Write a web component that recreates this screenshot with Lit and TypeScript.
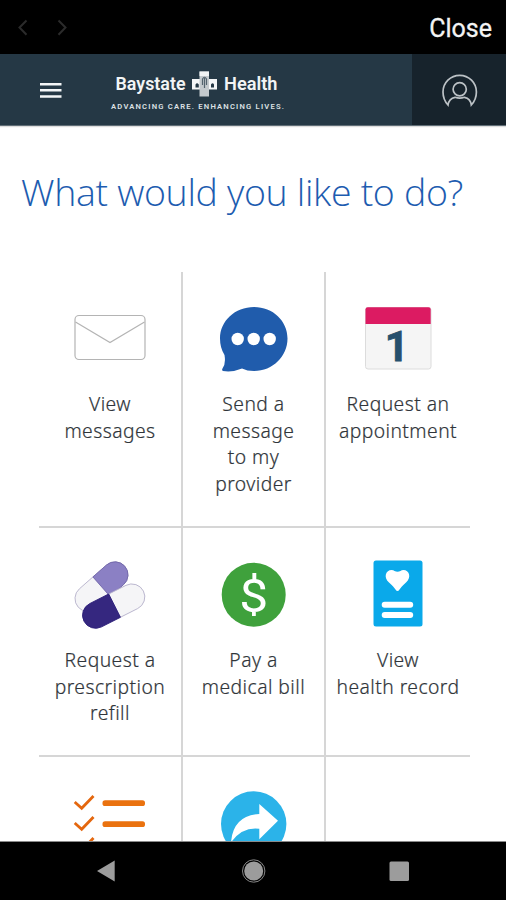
import { LitElement, html, svg, css, TemplateResult } from "lit";
import { customElement, property } from "lit/decorators.js";

const icons: Record<string, TemplateResult> = {
  envelope: svg`
    <rect x="10" y="18.500" width="70" height="44" rx="4" fill="#fff" stroke="#b4b4b4" stroke-width="1.200"/>
    <path d="M10.500 25 45 45.500 79.500 25" fill="none" stroke="#b4b4b4" stroke-width="1.200"/>`,
  bubble: svg`
    <path d="M45 10C64 10 78.500 24 78.500 41.500S64 74 45 74Q38 74 33 71.500Q23.500 75.500 14 74Q12.500 73.500 13.500 71.500Q17 67 15.500 58Q11 51 11 41.500C11 24 26 10 45 10Z" fill="#205cac"/>
    <g fill="#fff"><circle cx="28.700" cy="42" r="6.200"/><circle cx="44.700" cy="42" r="6.200"/><circle cx="60.700" cy="42" r="6.200"/></g>`,
  calendar: svg`
    <rect x="12.500" y="10.500" width="65.500" height="61.500" rx="2.500" fill="#f5f5f5" stroke="#dcdcdc"/>
    <path d="M12.500 27V12.500Q12.500 10.300 14.700 10.300H75.500Q77.700 10.300 77.700 12.500V27Z" fill="#dc1b62"/>
    <text x="43.700" y="64" text-anchor="middle" class="one">1</text>`,
  pills: svg`
    <g transform="translate(36.500 33.700) rotate(-41.300)">
      <rect x="-31" y="-13" width="62" height="26" rx="13" fill="#f5f5f7" stroke="#b3aec9" stroke-width=".8"/>
      <path d="M0-13H18A13 13 0 0 1 18 13H0Z" fill="#8b80c4" stroke="#6f65a8" stroke-width=".8"/>
    </g>
    <g transform="translate(48.700 53.100) rotate(-26.800)">
      <rect x="-33.300" y="-13" width="66.600" height="26" rx="13" fill="#f5f5f7" stroke="#b3aec9" stroke-width=".8"/>
      <path d="M1-13H-20.300A13 13 0 0 0-20.300 13H1Z" fill="#35277f" stroke="#2a1c78" stroke-width=".8"/>
    </g>`,
  dollar: svg`
    <circle cx="44.700" cy="41.700" r="32" fill="#3fa13c"/>
    <text x="30.200" y="58.500" textLength="29" lengthAdjust="spacingAndGlyphs" class="dollar">$</text>`,
  record: svg`
    <rect x="20.500" y="7.500" width="49" height="66" rx="2.500" fill="#0aa9ea"/>
    <path d="M44.500 38Q43.500 38 42.500 36.500Q41 34 36 29.500C30 24 33 17 38.500 17Q40.500 17 41.500 18Q44.500 19.500 47.500 18Q48.500 17 50.500 17C56 17 59 24 53 29.500Q48 34 46.500 36.500Q45.500 38 44.500 38Z" fill="#fff"/>
    <rect x="28.700" y="48.700" width="31.500" height="6" rx="3" fill="#fff"/>
    <rect x="28.700" y="59" width="31.500" height="6" rx="3" fill="#fff"/>`,
  checklist: svg`
    ${[0, 21, 42].map(dy => svg`
      <g transform="translate(0 ${dy})">
        <path d="M9.700 20 16.700 26.300 28.500 14" fill="none" stroke="#e4670e" stroke-width="2.800"/>
        <rect x="37.500" y="18.200" width="42.500" height="5.800" rx="2.600" fill="#ea720f"/>
      </g>`)}`,
  share: svg`
    <circle cx="44.700" cy="42" r="32.700" fill="#2bb3e9"/>
    <path d="M50.300 22 69 38.700 50.300 57.300V46.700Q33 44.500 22 60.500Q24 33.500 50.300 32Z" fill="#fff"/>`,
};

@customElement("action-tile")
class ActionTile extends LitElement {
  @property() icon = "";
  @property({ attribute: false }) lines: string[] = [];

  static styles = css`
    :host { display: flex; flex-direction: column; align-items: center; box-sizing: border-box; padding-top: 25px; }
    svg { display: block; width: 90px; height: 90px; flex: none; }
    .label { margin-top: 4px; text-align: center; white-space: nowrap; color: #30353a;
      font: 300 19.300px/26.700px "Noto Sans", "Open Sans", sans-serif; letter-spacing: .45px; -webkit-text-stroke: .2px #30353a; }
    .one { font: 700 42px Roboto, sans-serif; fill: #27506d; stroke: #27506d; stroke-width: .8px; }
    .dollar { font: 400 46px Roboto, sans-serif; fill: #fff; }
  `;

  render() {
    if (!this.icon) return html``;
    return html`
      <svg viewBox="0 0 90 90">${icons[this.icon]}</svg>
      <div class="label">${this.lines.map(l => html`<div>${l}</div>`)}</div>`;
  }
}

const tiles = [
  { icon: "envelope", lines: ["View", "messages"] },
  { icon: "bubble", lines: ["Send a", "message", "to my", "provider"] },
  { icon: "calendar", lines: ["Request an", "appointment"] },
  { icon: "pills", lines: ["Request a", "prescription", "refill"] },
  { icon: "dollar", lines: ["Pay a", "medical bill"] },
  { icon: "record", lines: ["View", "health record"] },
  { icon: "checklist", lines: [] },
  { icon: "share", lines: [] },
  { icon: "", lines: [] },
];

@customElement("app-root")
class AppRoot extends LitElement {
  static styles = css`
    :host { display: flex; flex-direction: column; width: 506px; height: 900px; overflow: hidden; background: #fff; }
    svg { display: block; }
    .browser { height: 54px; flex: none; background: #000; display: flex; justify-content: space-between; box-sizing: border-box; padding-right: 14px; }
    .close { font: 400 25px/54px Roboto, sans-serif; color: #f4f4f4; padding-top: 2px; -webkit-text-stroke: .3px #f4f4f4; }
    .header { height: 72px; flex: none; display: flex; background: #253845; box-sizing: border-box; border-bottom: 1px solid #5f6d76; box-shadow: 0 1px 1px #ddd; }
    .brand { width: 412px; }
    .account { flex: 1; background: #17232c; }
    .name { font: 600 18.500px Roboto, sans-serif; fill: #f2f4f5; }
    .tag { font: 600 7.600px Roboto, sans-serif; fill: #dde1e4; }
    .main { flex: 1; min-height: 0; overflow: hidden; box-sizing: border-box; border-bottom: 1px solid #8a8a8a; }
    h1 { margin: 0; padding: 40px 0 0 21px; height: 106px; white-space: nowrap; color: #1d5cb0;
      font: 300 37.500px/52px "Open Sans", sans-serif; letter-spacing: -.32px; }
    .grid { display: grid; grid-template-columns: 144px 143px 144px; grid-template-rows: 256px 229px 200px; margin-left: 39px; }
    .tile { border: 0 solid #d6d6d6; border-bottom-width: 2px; }
    .ruled { border-right-width: 2px; }
    .nav { height: 58px; flex: none; background: #000; }
  `;

  render() {
    return html`
      <div class="browser">
        <svg width="90" height="54" fill="none" stroke="#2b2b2b" stroke-width="2">
          <path d="M26.500 20.500 19.500 27.500 26.500 34.800M58.500 20.500 65.500 27.500 58.500 34.800"/>
        </svg>
        <div class="close">Close</div>
      </div>
      <div class="header">
        <svg class="brand" height="71" viewBox="0 54 412 71">
          <path d="M40 84.300H61.500M40 90.300H61.500M40 96.500H61.500" stroke="#f4f6f7" stroke-width="2.500"/>
          <text class="name" x="115.500" y="89.500" textLength="70" lengthAdjust="spacingAndGlyphs">Baystate</text>
          <text class="name" x="224" y="89.500" textLength="53.500" lengthAdjust="spacingAndGlyphs">Health</text>
          <path d="M192 79H217V89.500H192Z" fill="#f4f6f7"/>
          <path d="M199.500 71.500H209V96.500H199.500Z" fill="#c3c9cd"/>
          <path d="M199.500 71.500H209V76H199.500Z" fill="#f1f3f4"/>
          <path d="M195.500 87.500V84.500Q197 82 198.800 84.500V87.500ZM211 87.500V84.500Q212.700 82 214 84.500V87.500Z" fill="#253845"/>
          <path d="M202.500 85V79Q204.500 75.500 206.500 79V85M204.500 78V88" fill="none" stroke="#53636e" stroke-width="1.200"/>
          <text class="tag" x="111" y="108.500" textLength="173">ADVANCING CARE. ENHANCING LIVES.</text>
        </svg>
        <svg class="account" height="71" viewBox="412 54 94 71" fill="none" stroke="#bcc2c6" stroke-width="1.700">
          <path d="M448 105Q443 99.500 443 92A16.700 16.700 0 0 1 476.400 92Q476.400 99.500 471.300 105Q470.500 98.500 464.500 97.300Q459.700 99 455 97.300Q449 98.500 448 105Z"/>
          <circle cx="459.700" cy="89.300" r="6.600"/>
        </svg>
      </div>
      <div class="main">
        <h1>What would you like to do?</h1>
        <div class="grid">
          ${tiles.map((t, i) => html`
            <action-tile class="tile ${i % 3 < 2 ? "ruled" : ""}" .icon=${t.icon} .lines=${t.lines}></action-tile>`)}
        </div>
      </div>
      <svg class="nav" width="506" height="58" viewBox="0 842 506 58" fill="#9c9c9c">
        <path d="M97 871 114.700 860.500V881.500Z"/>
        <circle cx="253.700" cy="871" r="9.500"/>
        <circle cx="253.700" cy="871" r="11.200" fill="none" stroke="#888"/>
        <rect x="389.500" y="861.500" width="19.500" height="19.500" rx="1.500"/>
      </svg>
    `;
  }
}
